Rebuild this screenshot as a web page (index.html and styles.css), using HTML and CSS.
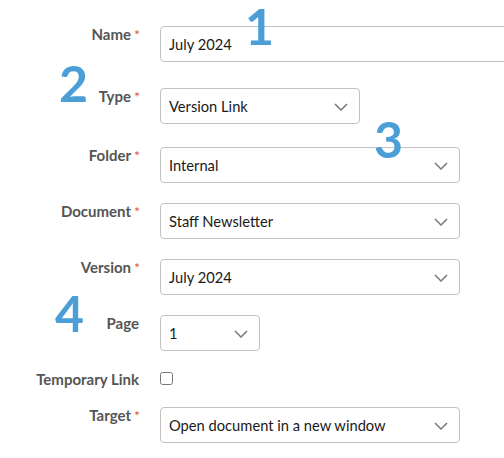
FILE: index.html
```html
<!DOCTYPE html>
<html>
<head>
<meta charset="utf-8">
<link rel="stylesheet" href="styles.css">
</head>
<body>
<div class="page">
  <form class="form">
    <div class="row row-name">
      <label class="label">Name<span class="req">*</span></label>
      <div class="control"><input class="input input-full" type="text" value="July 2024"></div>
    </div>
    <div class="row row-type">
      <label class="label">Type<span class="req">*</span></label>
      <div class="control">
        <div class="select w-200"><span>Version Link</span><svg class="chev" viewBox="0 0 14 8"><path d="M1 1 L7 7 L13 1"/></svg></div>
      </div>
    </div>
    <div class="row">
      <label class="label">Folder<span class="req">*</span></label>
      <div class="control">
        <div class="select w-300"><span>Internal</span><svg class="chev" viewBox="0 0 14 8"><path d="M1 1 L7 7 L13 1"/></svg></div>
      </div>
    </div>
    <div class="row">
      <label class="label">Document<span class="req">*</span></label>
      <div class="control">
        <div class="select w-300"><span>Staff Newsletter</span><svg class="chev" viewBox="0 0 14 8"><path d="M1 1 L7 7 L13 1"/></svg></div>
      </div>
    </div>
    <div class="row">
      <label class="label">Version<span class="req">*</span></label>
      <div class="control">
        <div class="select w-300"><span>July 2024</span><svg class="chev" viewBox="0 0 14 8"><path d="M1 1 L7 7 L13 1"/></svg></div>
      </div>
    </div>
    <div class="row">
      <label class="label label-noreq">Page</label>
      <div class="control">
        <div class="select w-100"><span>1</span><svg class="chev" viewBox="0 0 14 8"><path d="M1 1 L7 7 L13 1"/></svg></div>
      </div>
    </div>
    <div class="row row-check">
      <label class="label label-noreq">Temporary Link</label>
      <div class="control"><input class="check" type="checkbox"></div>
    </div>
    <div class="row">
      <label class="label">Target<span class="req">*</span></label>
      <div class="control">
        <div class="select w-300"><span>Open document in a new window</span><svg class="chev" viewBox="0 0 14 8"><path d="M1 1 L7 7 L13 1"/></svg></div>
      </div>
    </div>
  </form>
  <div class="callout c1">1</div>
  <div class="callout c2">2</div>
  <div class="callout c3">3</div>
  <div class="callout c4">4</div>
</div>
</body>
</html>
```
FILE: styles.css
```css
html, body {
  margin: 0;
  padding: 0;
  background: #fff;
}
body {
  font-family: Lato, "Open Sans", sans-serif;
  overflow: hidden;
}
.page {
  position: relative;
  width: 504px;
  height: 458px;
}
.form {
  display: flex;
  flex-direction: column;
  gap: 20px;
  padding-top: 26px;
}
.row {
  display: grid;
  grid-template-columns: 140px 1fr;
  column-gap: 20px;
  align-items: start;
}
.row-name { margin-bottom: 6px; }
.row-type { margin-bottom: 3px; }
.label {
  font-size: 15px;
  font-weight: 700;
  color: #555;
  text-align: right;
  line-height: 17px;
  white-space: nowrap;
}
.label-noreq { padding-right: 1px; }
.req {
  color: #d9534f;
  font-weight: 400;
  font-size: 14px;
  margin-left: 3px;
}
.control {
  display: flex;
}
.input, .select {
  box-sizing: border-box;
  height: 36px;
  border: 1px solid #c2c2c2;
  border-radius: 4px;
  background: #fff;
  font-family: Lato, "Open Sans", sans-serif;
  font-size: 14.7px;
  color: #1a1a1a;
  padding: 0 8px;
}
.input-full {
  width: 360px;
  outline: none;
}
.select {
  position: relative;
  display: flex;
  align-items: center;
  line-height: 18px;
}
.w-100 { width: 100px; }
.w-200 { width: 200px; }
.w-300 { width: 300px; }
.chev {
  position: absolute;
  right: 11px;
  top: 14px;
  width: 14px;
  height: 8px;
  fill: none;
  stroke: #777;
  stroke-width: 1.5;
}
.row-check { height: 16px; }
.check {
  margin: 1px 0 0 0;
  width: 13px;
  height: 13px;
}
.callout {
  position: absolute;
  font-family: Lato, sans-serif;
  font-weight: 700;
  font-size: 50px;
  line-height: 50px;
  color: #4b9fd6;
}
.c1 { left: 245px; top: 1px; }
.c2 { left: 59px; top: 58px; }
.c3 { left: 374px; top: 114px; }
.c4 { left: 55px; top: 288px; }
```
